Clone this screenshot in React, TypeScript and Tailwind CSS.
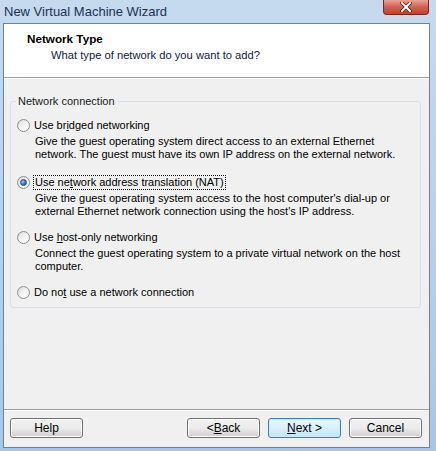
import React from "react";

const font = { fontFamily: '"Liberation Sans", Arial, sans-serif' };

function Radio({ checked }: { checked?: boolean }) {
  return (
    <span className="relative inline-flex w-[13px] h-[13px] rounded-full border border-[#8f8f8f] bg-gradient-to-br from-[#d8d8d8] via-[#f4f4f4] to-[#ffffff] items-center justify-center shrink-0">
      {checked && (
        <span className="w-[7px] h-[7px] rounded-full bg-[radial-gradient(circle_at_35%_35%,#9fd4ff_0%,#2a86d8_45%,#0f4f9a_100%)] border border-[#1a4f8a]" />
      )}
    </span>
  );
}

function Btn({ children, primary }: { children: React.ReactNode; primary?: boolean }) {
  return (
    <div
      className={
        "w-[73px] h-[20px] rounded-[3px] border flex items-center justify-center text-[12px] text-black " +
        (primary
          ? "border-[#3c7fb1] bg-gradient-to-b from-[#eaf6fd] via-[#d9f0fc] to-[#bee6fd] shadow-[inset_0_0_0_1px_#c7ecfd]"
          : "border-[#707070] bg-gradient-to-b from-[#f2f2f2] via-[#ebebeb] to-[#cfcfcf] shadow-[inset_0_0_0_1px_#fcfcfc]")
      }
    >
      {children}
    </div>
  );
}

export default function App() {
  return (
    <div
      className="relative w-[436px] h-[451px] overflow-hidden bg-gradient-to-b from-[#c6daef] via-[#b9d1ea] to-[#aac5e4] text-black"
      style={font}
    >
      {/* title bar */}
      <div className="h-[23px] flex items-center pl-[4px] text-[13px] text-[#1a3354] whitespace-nowrap">
        New Virtual Machine Wizard
      </div>
      {/* close button */}
      <div className="absolute left-[383px] top-0 w-[46px] h-[15px] rounded-b-[4px] border border-t-0 border-[#6e2c24] bg-gradient-to-b from-[#e8a193] via-[#d2604c] to-[#c1412c] flex items-center justify-center">
        <svg width="12" height="10" viewBox="0 0 12 10">
          <path d="M2 1 L10 9 M10 1 L2 9" stroke="#4a1a12" strokeWidth="3.4" strokeLinecap="square" />
          <path d="M2 1 L10 9 M10 1 L2 9" stroke="#ffffff" strokeWidth="2" strokeLinecap="square" />
        </svg>
      </div>

      {/* client area */}
      <div className="ml-[3px] w-[427px] h-[425px] border border-[#6d8199] bg-[#f0f0f0] flex flex-col">
        {/* header */}
        <div className="h-[54px] bg-white border-b border-[#a0a0a0] pt-[7px] pl-[23px] whitespace-nowrap">
          <div className="text-[11.7px] font-bold leading-[16px]">Network Type</div>
          <div className="text-[11.2px] leading-[16px] pl-[24px] text-[#13213f]">
            What type of network do you want to add?
          </div>
        </div>
        <div className="h-px bg-white" />

        {/* body */}
        <div className="flex-1 pt-[22px]">
          <div className="relative ml-[6px] w-[411px] h-[207px] border border-[#d5dfe5] rounded-[3px] pt-[15px] pl-[6px] text-[11px] whitespace-nowrap">
            <span className="absolute left-[5px] -top-[9px] bg-[#f0f0f0] px-[2px] leading-[16px] text-[#1b1b1b]">
              Network connection
            </span>

            <div>
              <div className="flex items-center gap-[4px] h-[16px]">
                <Radio />
                <span>
                  Use br<u>i</u>dged networking
                </span>
              </div>
              <div className="pl-[18px] pt-[2px] leading-[13px]">
                Give the guest operating system direct access to an external Ethernet
                <br />
                network. The guest must have its own IP address on the external network.
              </div>
            </div>

            <div className="mt-[13px]">
              <div className="flex items-center gap-[3px] h-[16px]">
                <Radio checked />
                <span className="border border-dotted border-black px-[1px] leading-[13px]">
                  Use ne<u>t</u>work address translation (NAT)
                </span>
              </div>
              <div className="pl-[18px] pt-[2px] leading-[13px]">
                Give the guest operating system access to the host computer's dial-up or
                <br />
                external Ethernet network connection using the host's IP address.
              </div>
            </div>

            <div className="mt-[11px]">
              <div className="flex items-center gap-[4px] h-[16px]">
                <Radio />
                <span>
                  Use <u>h</u>ost-only networking
                </span>
              </div>
              <div className="pl-[18px] pt-[2px] leading-[13px]">
                Connect the guest operating system to a private virtual network on the host
                <br />
                computer.
              </div>
            </div>

            <div className="mt-[11px]">
              <div className="flex items-center gap-[4px] h-[16px]">
                <Radio />
                <span>
                  Do no<u>t</u> use a network connection
                </span>
              </div>
            </div>
          </div>
        </div>

        {/* footer */}
        <div className="border-t border-[#a0a0a0] shadow-[inset_0_1px_0_#ffffff] pt-[8px] pb-[9px] pl-[6px] pr-[7px] flex">
          <Btn>Help</Btn>
          <div className="flex-1" />
          <div className="flex gap-[8px]">
            <Btn>
              &lt; <u>B</u>ack
            </Btn>
            <Btn primary>
              <u>N</u>ext &gt;
            </Btn>
            <Btn>Cancel</Btn>
          </div>
        </div>
      </div>
    </div>
  );
}
